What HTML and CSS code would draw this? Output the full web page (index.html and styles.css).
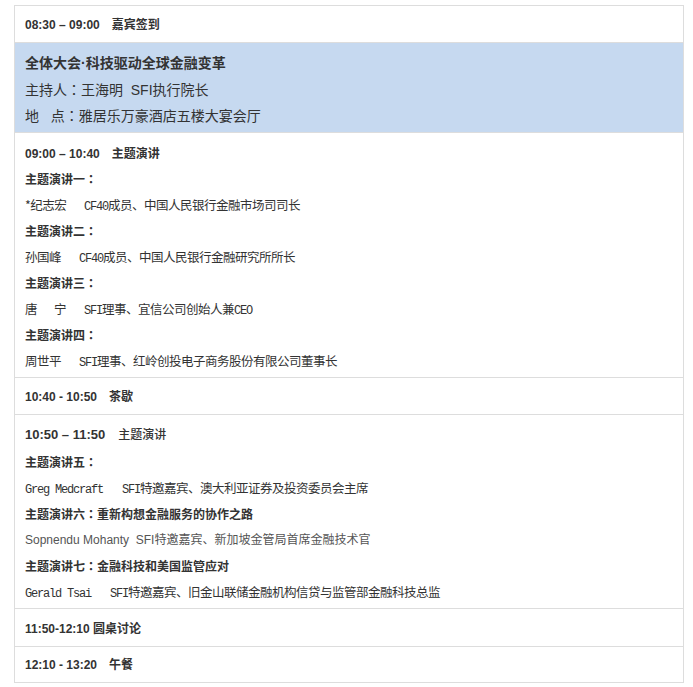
FILE: index.html
```html
<!DOCTYPE html>
<html lang="zh-CN">
<head>
    <meta charset="UTF-8">
    <meta name="viewport" content="width=device-width, initial-scale=1.0">
    <title>会议议程</title>
    <link rel="stylesheet" href="styles.css">
</head>
<body>
    <main class="schedule">
        <div class="row short first">
            <span class="time">08:30 – 09:00</span><span class="topic">嘉宾签到</span>
        </div>
        <div class="row plenary">
            <p class="plenaryTitle">全体大会·科技驱动全球金融变革</p>
            <p class="line14">主持人<span class="colon" lang="zh-TW">：</span>王海明&nbsp;&nbsp;SFI执行院长</p>
            <p class="line14">地&nbsp;&nbsp;&nbsp;点<span class="colon" lang="zh-TW">：</span>雅居乐万豪酒店五楼大宴会厅</p>
        </div>
        <div class="row block one">
            <p class="label"><span class="time">09:00 – 10:40</span><span class="topic">主题演讲</span></p>
            <p class="label">主题演讲一<span class="colon" lang="zh-TW">：</span></p>
            <p class="speaker"><span class="name">*纪志宏</span><span class="mono">CF40</span>成员、中国人民银行金融市场司司长</p>
            <p class="label">主题演讲二<span class="colon" lang="zh-TW">：</span></p>
            <p class="speaker"><span class="name n2">孙国峰</span><span class="mono">CF40</span>成员、中国人民银行金融研究所所长</p>
            <p class="label">主题演讲三<span class="colon" lang="zh-TW">：</span></p>
            <p class="speaker"><span class="name n3">唐<span class="wide">宁</span></span><span class="mono">SFI</span>理事、宜信公司创始人兼<span class="mono">CEO</span></p>
            <p class="label">主题演讲四<span class="colon" lang="zh-TW">：</span></p>
            <p class="speaker"><span class="name n2">周世平</span><span class="mono">SFI</span>理事、红岭创投电子商务股份有限公司董事长</p>
        </div>
        <div class="row short">
            <span class="time">10:40 - 10:50</span><span class="topic">茶歇</span>
        </div>
        <div class="row block two">
            <p class="session"><span class="time bigTime">10:50 – 11:50</span><span class="topic plain">主题演讲</span></p>
            <p class="label">主题演讲五<span class="colon" lang="zh-TW">：</span></p>
            <p class="speaker"><span class="mono">Greg Medcraft</span><span class="mono gapL">SFI</span>特邀嘉宾、澳大利亚证券及投资委员会主席</p>
            <p class="label">主题演讲六<span class="colon" lang="zh-TW">：</span>重新构想金融服务的协作之路</p>
            <p class="speaker gray">Sopnendu Mohanty&nbsp;&nbsp;SFI特邀嘉宾、新加坡金管局首席金融技术官</p>
            <p class="label">主题演讲七<span class="colon" lang="zh-TW">：</span>金融科技和美国监管应对</p>
            <p class="speaker"><span class="mono">Gerald Tsai</span><span class="mono gapL">SFI</span>特邀嘉宾、旧金山联储金融机构信贷与监管部金融科技总监</p>
        </div>
        <div class="row short round">
            <span class="time">11:50-12:10</span> <span class="topicTight">圆桌讨论</span>
        </div>
        <div class="row short last">
            <span class="time">12:10 - 13:20</span><span class="topic">午餐</span>
        </div>
    </main>
</body>
</html>
```

FILE: styles.css
```css
*{
    margin: 0; padding: 0;
    box-sizing: border-box;
}
body{
    font-family: "Liberation Sans", "Noto Sans CJK SC", sans-serif;
    color: #333;
    background-color: #fff;
}
.schedule{
    width: 670px;
    margin: 5px 0 0 14px;
    border: 1px solid #ddd;
    border-bottom: 0;
}
.row{
    border-bottom: 1px solid #ddd;
    padding: 0 10px;
}
.short{
    height: 37px;
    padding-top: 8px;
    line-height: 20px;
    font-size: 12px;
    font-weight: bold;
    white-space: nowrap;
}
.round{
    height: 38px;
    padding-top: 9px;
}
.last{
    height: 36px;
    padding-top: 7px;
}
.time{
    font-family: "Liberation Sans", sans-serif;
    font-weight: bold;
    font-size: 12px;
}
.bigTime{
    font-size: 13px;
}
.topic{
    margin-left: 12px;
    font-family: "Noto Sans CJK SC", sans-serif;
    font-weight: bold;
    font-size: 12px;
}
.topic.plain{
    font-weight: 500;
    margin-left: 13px;
}
.topicTight{
    font-family: "Noto Sans CJK SC", sans-serif;
    font-weight: bold;
    font-size: 12px;
}
.colon{
    font-family: "Noto Sans CJK TC", sans-serif;
}
.plenary{
    background-color: #c6d9f0;
    padding-top: 7px;
    padding-bottom: 4px;
}
.plenary p{
    height: 26px;
    white-space: nowrap;
}
.plenaryTitle{
    font-size: 14px;
    font-weight: bold;
    line-height: 26px;
}
.line14{
    font-size: 14px;
    line-height: 26px;
}
.block p{
    height: 26px;
    white-space: nowrap;
}
.block.one{
    padding-top: 7px;
    padding-bottom: 3px;
}
.block.two{
    padding-top: 4px;
    padding-bottom: 3px;
}
.label{
    font-size: 12px;
    font-weight: bold;
    line-height: 26px;
}
.block .session{
    height: 30px;
    line-height: 30px;
}
.speaker{
    font-size: 12.5px;
    line-height: 26px;
    font-family: "Noto Sans CJK SC", sans-serif;
    letter-spacing: -0.5px;
}
.gray{
    font-family: "Liberation Sans", "Noto Sans CJK SC", sans-serif;
    font-size: 12px;
    letter-spacing: 0;
    color: #555;
}
.name{
    display: inline-block;
    width: 59px;
}
.n2{
    width: 54px;
}
.n3{
    width: 59px;
}
.wide{
    margin-left: 17px;
}
.mono{
    font-family: "Liberation Mono", monospace;
    font-size: 12px;
    letter-spacing: -1.2px;
}
.gapL{
    margin-left: 19px;
}
```
